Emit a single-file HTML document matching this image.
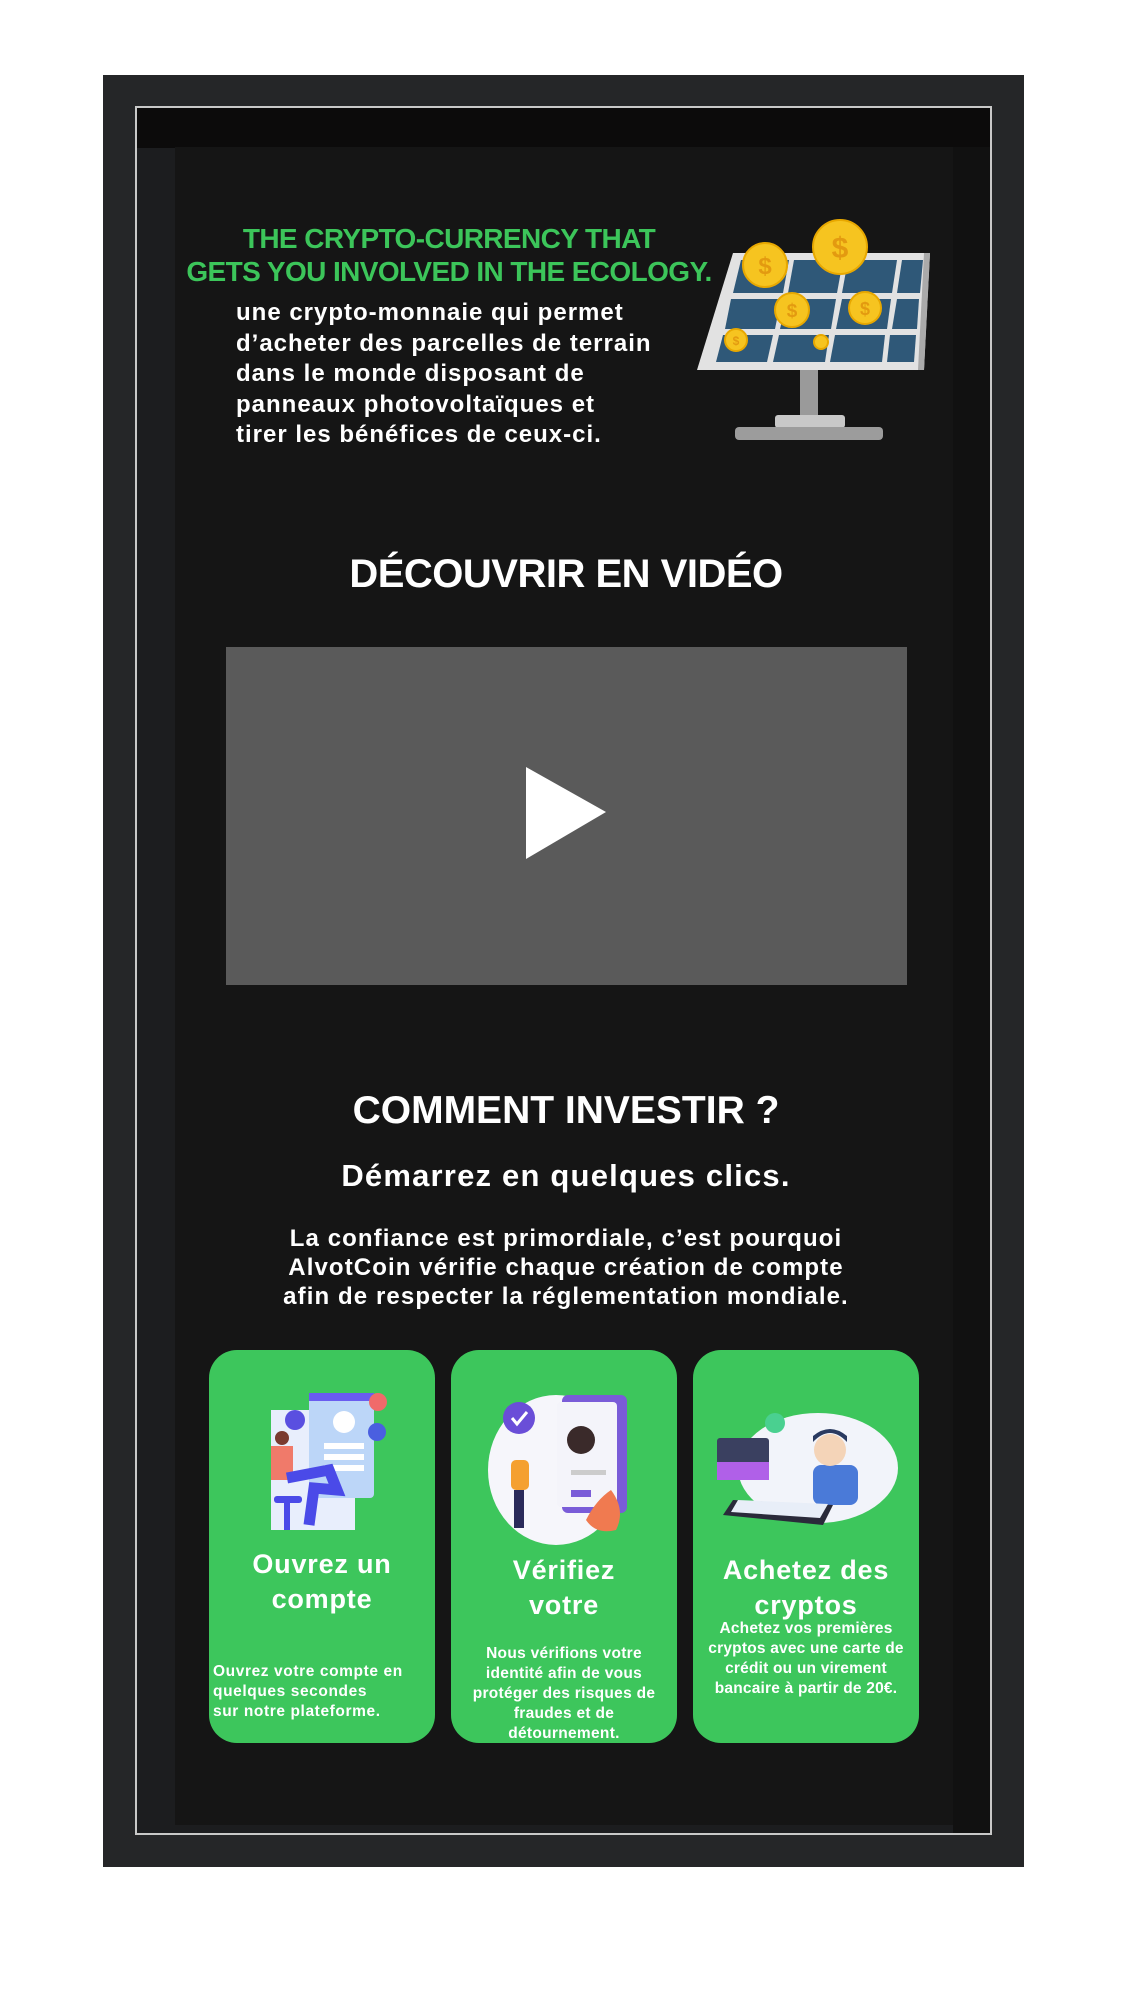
<!DOCTYPE html>
<html><head><meta charset="utf-8">
<style>
html,body{margin:0;padding:0;background:#fff;}
body{width:1132px;height:2007px;position:relative;overflow:hidden;font-family:"Liberation Sans",sans-serif;}
.abs{position:absolute;}
.t{position:absolute;left:0;width:1132px;text-align:center;color:#fff;font-weight:bold;white-space:nowrap;}
.card{position:absolute;top:1350px;width:226px;height:393px;background:#3dc65c;border-radius:28px;overflow:hidden;}
.ct{position:absolute;left:0;width:100%;text-align:center;color:#fff;font-weight:bold;font-size:27px;line-height:35px;letter-spacing:0.8px;}
.cd{position:absolute;color:#fff;font-weight:bold;font-size:15.5px;line-height:20px;white-space:nowrap;letter-spacing:0.6px;}
</style></head><body>
<div class="abs" style="left:103px;top:75px;width:921px;height:1792px;background:#252628;"></div>
<div class="abs" style="left:135px;top:106px;width:857px;height:1729px;background:#c8c8c8;"></div>
<div class="abs" style="left:137px;top:108px;width:853px;height:1725px;background:#1c1d1f;"></div>
<div class="abs" style="left:137px;top:108px;width:853px;height:40px;background:#0c0b0b;"></div>
<div class="abs" style="left:175px;top:147px;width:778px;height:1678px;background:#151515;"></div>
<div class="abs" style="left:953px;top:147px;width:37px;height:1686px;background:#111;"></div>

<div class="t" style="left:-117px;top:222px;font-size:28px;line-height:33px;color:#3cc55a;letter-spacing:-0.6px;">THE CRYPTO-CURRENCY THAT<br>GETS YOU INVOLVED IN THE ECOLOGY.</div>
<div class="abs" style="left:236px;top:298px;color:#fff;font-weight:bold;font-size:24px;line-height:30.5px;letter-spacing:1px;white-space:nowrap;">une crypto-monnaie qui permet<br>d’acheter des parcelles de terrain<br>dans le monde disposant de<br>panneaux photovoltaïques et<br>tirer les bénéfices de ceux-ci.</div>

<svg class="abs" style="left:0;top:0" width="1132" height="600">
<rect x="800" y="362" width="18" height="55" fill="#9a9a9a"/>
<rect x="775" y="415" width="70" height="13" rx="3" fill="#c8c8c8"/>
<rect x="735" y="427" width="148" height="13" rx="4" fill="#9c9c9c"/>
<polygon points="733,253 930,253 924,370 697,370" fill="#e2e2e2"/>
<polygon points="924,253 930,253 924,370 918,370" fill="#aaa"/>
<g fill="#2f5878">
<polygon points="741,260 789,260 783,293 733,293"/><polygon points="794,260 843,260 837,293 788,293"/><polygon points="848,260 897,260 892,293 842,293"/><polygon points="902,260 923,260 920,293 897,293"/>
<polygon points="731,299 781,299 775,329 725,329"/><polygon points="787,299 836,299 831,329 780,329"/><polygon points="842,299 891,299 887,329 836,329"/><polygon points="897,299 919,299 917,329 892,329"/>
<polygon points="723,335 773,335 767,362 716,362"/><polygon points="779,335 829,335 825,362 773,362"/><polygon points="835,335 885,335 882,362 830,362"/><polygon points="890,335 916,335 914,362 887,362"/>
</g>
<g fill="#f6c420" stroke="#e8a800" stroke-width="2">
<circle cx="765" cy="265" r="22"/><circle cx="840" cy="247" r="27"/><circle cx="792" cy="310" r="17"/><circle cx="865" cy="308" r="16"/><circle cx="736" cy="340" r="11"/><circle cx="821" cy="342" r="7"/>
</g>
<g fill="#e39a10" font-family="Liberation Sans" font-weight="bold" text-anchor="middle">
<text x="765" y="274" font-size="24">$</text><text x="840" y="258" font-size="30">$</text><text x="792" y="317" font-size="19">$</text><text x="865" y="315" font-size="18">$</text><text x="736" y="345" font-size="12">$</text>
</g>
</svg>

<div class="t" style="top:551px;font-size:40px;line-height:46px;letter-spacing:-0.5px;">DÉCOUVRIR EN VIDÉO</div>
<div class="abs" style="left:226px;top:647px;width:681px;height:338px;background:#5a5a5a;"></div>
<svg class="abs" style="left:520px;top:765px" width="90" height="96"><polygon points="6,2 86,47 6,94" fill="#fff"/></svg>

<div class="t" style="top:1088px;font-size:39px;line-height:46px;">COMMENT INVESTIR ?</div>
<div class="t" style="top:1157px;font-size:31px;line-height:38px;letter-spacing:1.2px;">Démarrez en quelques clics.</div>
<div class="t" style="top:1224px;font-size:24px;line-height:29px;letter-spacing:1.1px;">La confiance est primordiale, c’est pourquoi<br>AlvotCoin vérifie chaque création de compte<br>afin de respecter la réglementation mondiale.</div>

<div class="card" style="left:209px;">
 <svg class="abs" style="left:0;top:0" width="226" height="200">
  <rect x="62" y="60" width="84" height="120" fill="#e8eefc"/>
  <rect x="100" y="43" width="65" height="105" rx="4" fill="#bcd6f8"/><rect x="100" y="43" width="65" height="8" fill="#6a5cf0"/>
  <circle cx="135" cy="72" r="11" fill="#fff"/><circle cx="86" cy="70" r="10" fill="#5a4fe0"/>
  <rect x="115" y="93" width="40" height="6" fill="#fff"/><rect x="115" y="104" width="40" height="6" fill="#fff"/><rect x="115" y="115" width="40" height="6" fill="#fff"/>
  <circle cx="169" cy="52" r="9" fill="#f06a6a"/><circle cx="168" cy="82" r="9" fill="#4a5fe0"/>
  <rect x="62" y="96" width="22" height="34" fill="#f07a6a"/><circle cx="73" cy="88" r="7" fill="#7a3a30"/>
  <path d="M78 128 L120 120 L128 140 L105 138 L100 175" stroke="#4a4ae8" stroke-width="11" fill="none"/>
  <rect x="65" y="146" width="28" height="7" rx="3" fill="#4a4ae8"/><rect x="75" y="152" width="6" height="28" fill="#4a4ae8"/>
 </svg>
 <div class="ct" style="top:197px;">Ouvrez un<br>compte</div>
 <div class="cd" style="left:4px;top:312px;text-align:left;">Ouvrez votre compte en<br>quelques secondes<br>sur notre plateforme.</div>
</div>
<div class="card" style="left:451px;">
 <svg class="abs" style="left:0;top:0" width="226" height="200">
  <ellipse cx="105" cy="120" rx="68" ry="75" fill="#f6f6fb"/>
  <rect x="111" y="45" width="65" height="118" rx="6" fill="#7a5cd8"/><rect x="106" y="52" width="60" height="105" rx="4" fill="#f4f4fa"/>
  <circle cx="130" cy="90" r="14" fill="#3a2a2a"/><rect x="120" y="120" width="35" height="5" fill="#ccc"/>
  <rect x="120" y="140" width="20" height="7" fill="#7a5cd8"/>
  <circle cx="68" cy="68" r="16" fill="#6a4ed8"/><path d="M61 68 l5 6 l10 -12" stroke="#fff" stroke-width="3" fill="none"/>
  <rect x="60" y="110" width="18" height="30" rx="5" fill="#f5a030"/><rect x="63" y="140" width="10" height="38" fill="#2a2a5a"/>
  <path d="M160 140 q15 20 5 40 q-20 5 -30 -10 q10 -20 25 -30z" fill="#f07a50"/>
 </svg>
 <div class="ct" style="top:203px;">Vérifiez<br>votre</div>
 <div class="cd" style="left:0;width:226px;text-align:center;top:294px;letter-spacing:0.3px;">Nous vérifions votre<br>identité afin de vous<br>protéger des risques de<br>fraudes et de<br>détournement.</div>
</div>
<div class="card" style="left:693px;">
 <svg class="abs" style="left:0;top:0" width="226" height="200">
  <ellipse cx="125" cy="118" rx="80" ry="55" fill="#f2f4fa"/>
  <circle cx="82" cy="73" r="10" fill="#4ad090"/>
  <rect x="24" y="88" width="52" height="40" rx="3" fill="#3a4060"/><rect x="24" y="112" width="52" height="18" fill="#b060e8"/>
  <rect x="120" y="115" width="45" height="40" rx="8" fill="#4a7ad8"/><circle cx="137" cy="100" r="16" fill="#f4d4b8"/><path d="M120 92 q17 -18 34 0 v-6 q-17 -14 -34 0z" fill="#2a3a60"/>
  <polygon points="40,150 140,155 130,175 30,165" fill="#2a2a3a"/><polygon points="45,150 135,154 127,168 38,162" fill="#e8eef8"/>
 </svg>
 <div class="ct" style="top:203px;">Achetez des<br>cryptos</div>
 <div class="cd" style="left:0;width:226px;text-align:center;top:269px;letter-spacing:0.2px;">Achetez vos premières<br>cryptos avec une carte de<br>crédit ou un virement<br>bancaire à partir de 20€.</div>
</div>
</body></html>
